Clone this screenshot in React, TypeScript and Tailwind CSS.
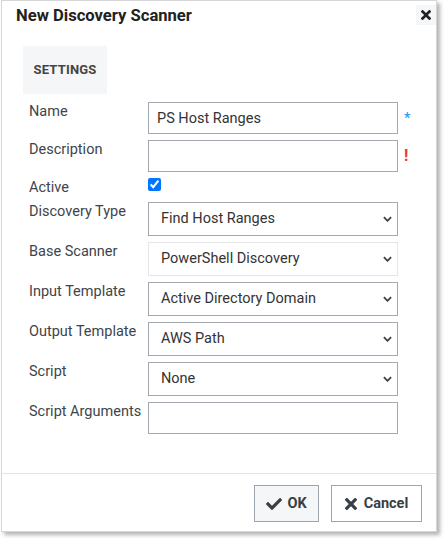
import type { ReactNode } from "react"

function TimesIcon({ className }: { className?: string }) {
  return (
    <svg viewBox="0 80 352 352" className={className} fill="currentColor">
      <path d="M242.72 256l100.07-100.07c12.28-12.28 12.28-32.19 0-44.48l-22.24-22.24c-12.28-12.28-32.19-12.28-44.48 0L176 189.28 75.930 89.21c-12.28-12.28-32.19-12.28-44.48 0L9.21 111.45c-12.28 12.28-12.28 32.190 0 44.48L109.28 256 9.21 356.07c-12.28 12.28-12.28 32.19 0 44.48l22.24 22.24c12.28 12.28 32.2 12.28 44.48 0L176 322.72l100.07 100.07c12.28 12.28 32.2 12.28 44.48 0l22.24-22.24c12.28-12.28 12.28-32.19 0-44.48L242.72 256z" />
    </svg>
  )
}

function CheckIcon({ className }: { className?: string }) {
  return (
    <svg viewBox="0 65 512 382" className={className} fill="currentColor">
      <path d="M173.898 439.404l-166.4-166.4c-9.997-9.997-9.997-26.206 0-36.204l36.203-36.204c9.997-9.998 26.207-9.998 36.204 0L192 312.69 432.095 72.596c9.997-9.997 26.207-9.997 36.204 0l36.203 36.204c9.997 9.997 9.997 26.206 0 36.204l-294.4 294.401c-9.998 9.997-26.207 9.997-36.204-.001z" />
    </svg>
  )
}

function Chevron() {
  return (
    <svg
      viewBox="0 0 10 6"
      className="absolute right-[6px] top-1/2 -translate-y-1/2 w-[9px] h-[6px] pointer-events-none text-[#3a3f44]"
      fill="none"
      stroke="currentColor"
      strokeWidth="2"
    >
      <path d="M1 1l4 4 4-4" />
    </svg>
  )
}

function Row({ label, children, mark }: { label: string; children: ReactNode; mark?: ReactNode }) {
  return (
    <div className="flex items-start">
      <div className="w-[119px] h-[18px] pt-px shrink-0 text-[14.5px] leading-[18px] text-[#40454a]">{label}</div>
      <div className="w-[250px] shrink-0">{children}</div>
      {mark && <div className="ml-[6px] self-center">{mark}</div>}
    </div>
  )
}

function TextInput({ value }: { value?: string }) {
  return (
    <input
      type="text"
      defaultValue={value}
      className="block w-full h-8 px-2 border border-[#a3a9ae] bg-white text-[14.5px] text-[#333] outline-none"
    />
  )
}

function Select({ value, light }: { value: string; light?: boolean }) {
  return (
    <div className="relative">
      <select
        defaultValue={value}
        className={`block w-full h-[34px] pl-3 pr-6 appearance-none bg-white text-[14.5px] text-[#333] outline-none border ${
          light ? "border-[#e4e6e8]" : "border-[#a3a9ae]"
        }`}
      >
        <option>{value}</option>
      </select>
      <Chevron />
    </div>
  )
}

export default function App() {
  return (
    <div className="w-[446px] h-[540px] bg-white font-['Roboto',sans-serif]">
      <div className="ml-px w-[436px] h-[532px] border border-[#d6d6d6] bg-white shadow-[3px_3px_4px_rgba(0,0,0,0.3)] flex flex-col">
        <div className="h-[25px] flex items-start justify-between">
          <h1 className="ml-[14px] mt-[5px] text-[16.6px] leading-[20px] font-bold text-[#222]">New Discovery Scanner</h1>
          <button className="mt-[4px] w-5 h-5 bg-[#f5f6f8] flex items-center justify-center text-[#222]">
            <TimesIcon className="w-[10px] h-[10px]" />
          </button>
        </div>

        <div className="ml-[21px] mt-[20px] w-[84px] h-[48px] bg-[#f5f6f8] flex items-center justify-center text-[13px] tracking-[0.2px] font-bold text-[#444] uppercase">
          Settings
        </div>

        <div className="flex-1 mt-2 pl-[27px] flex flex-col gap-[6px]">
          <Row label="Name" mark={<span className="text-[15px] leading-none text-[#2196f3]">*</span>}>
            <TextInput value="PS Host Ranges" />
          </Row>
          <Row label="Description" mark={<span className="text-[16px] leading-none font-bold text-[#e53935]">!</span>}>
            <TextInput />
          </Row>
          <Row label="Active">
            <input type="checkbox" defaultChecked className="block w-[13px] h-[13px] accent-[#0075ff]" />
          </Row>
          <Row label="Discovery Type">
            <Select value="Find Host Ranges" />
          </Row>
          <Row label="Base Scanner">
            <Select value="PowerShell Discovery" light />
          </Row>
          <Row label="Input Template">
            <Select value="Active Directory Domain" />
          </Row>
          <Row label="Output Template">
            <Select value="AWS Path" />
          </Row>
          <Row label="Script">
            <Select value="None" />
          </Row>
          <Row label="Script Arguments">
            <TextInput />
          </Row>
        </div>

        <div className="h-[58px] border-t border-[#e3e3e3] flex items-start justify-end gap-3 pt-[11px] pr-[14px]">
          <button className="w-[65px] h-[37px] border border-[#9ca5ae] bg-[#f5f6f8] flex items-center justify-center gap-[5px] text-[14.5px] font-bold text-[#3a3f44]">
            <CheckIcon className="w-4 h-3" />
            OK
          </button>
          <button className="w-[91px] h-[37px] border border-[#9ca5ae] bg-white flex items-center justify-center gap-[7px] text-[14.5px] font-bold text-[#3a3f44]">
            <TimesIcon className="w-3 h-3" />
            Cancel
          </button>
        </div>
      </div>
    </div>
  )
}
